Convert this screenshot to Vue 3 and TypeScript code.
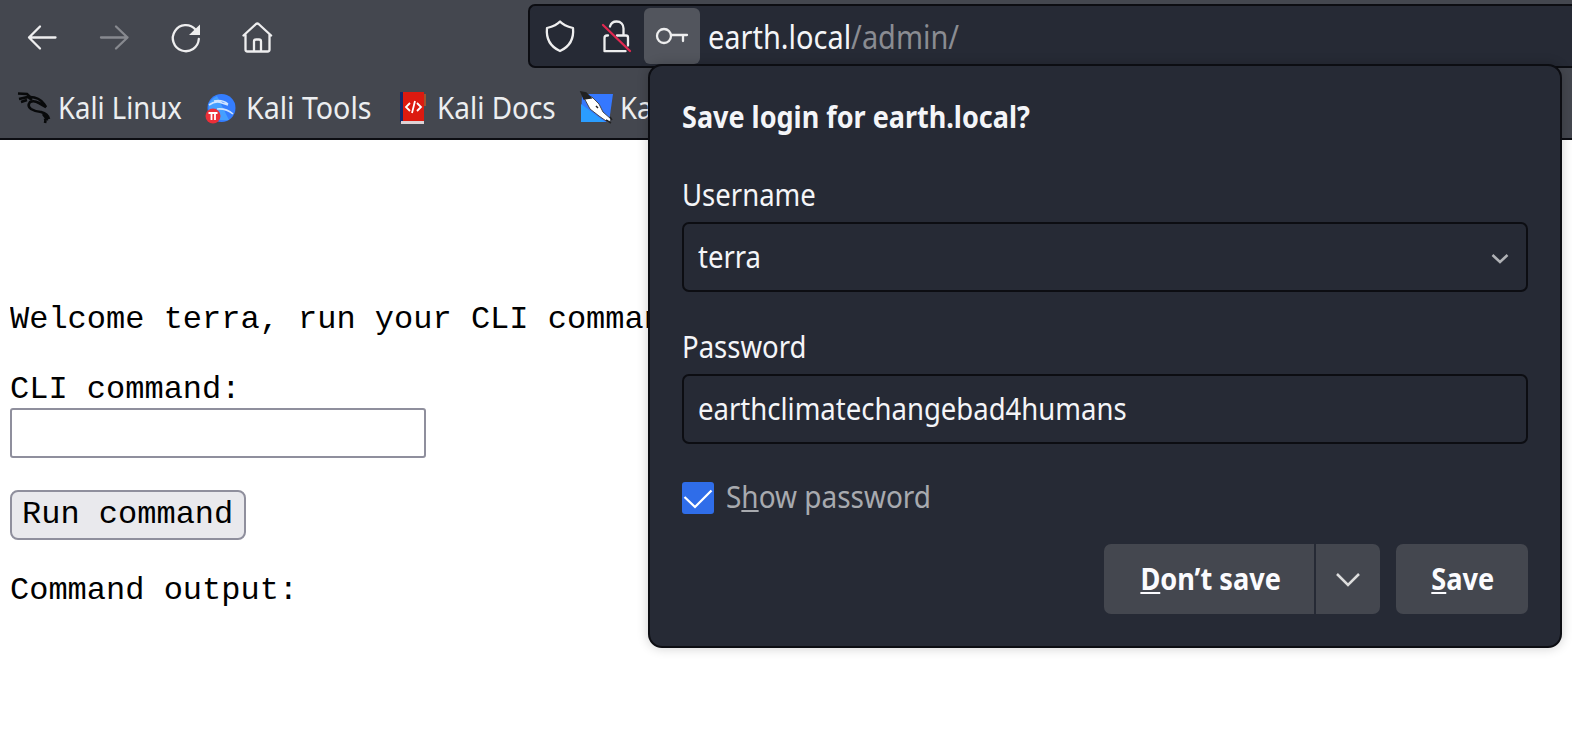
<script setup lang="ts">
import { ref } from 'vue'

const username = ref('terra')
const password = ref('earthclimatechangebad4humans')
const command = ref('')
</script>

<template>
  <div class="window">
    <header class="chrome">
      <div class="toolbar">
        <nav class="nav">
          <svg class="ico" viewBox="0 0 32 32"><path d="M29.500 16.500H3M14 5.500 3 16.500l11 11" /></svg>
          <svg class="ico dim" viewBox="0 0 32 32"><path d="M3 16.500h26.500M18 5.500 29.500 16.500 18 27.500" /></svg>
          <svg class="ico" viewBox="0 0 32 32"><path d="M28.800 18A13 13 0 1 1 25.500 8.500" /><path class="solid" d="M30 3.500v10.500H19z" /></svg>
          <svg class="ico" viewBox="0 0 32 32"><path d="M1.500 14.500 14 3q1.300-1 2.600 0l12.500 11.500M3.500 13.500v15q0 2 2 2h20q2 0 2-2v-15M12 30V20.500q0-2 2-2h3q2 0 2 2V30" /></svg>
        </nav>
        <div class="urlbar">
          <svg class="ico shield" viewBox="0 0 32 32"><path d="M16 1.500 C13 5 7 7 3 8 C2 18 5 26 16 31 C27 26 30 18 29 8 C25 7 19 5 16 1.500Z" /></svg>
          <svg class="ico lock" viewBox="0 0 32 32"><path d="M10 6.500C11 3 13.500 1.500 16.500 1.500 21 1.500 23.500 4.500 23.500 8.500V15.500M8 15.500H7q-2.500 0-2.500 2.500v13.200h21M17 15.500h9q2 0 2 2v8" /><path class="slash" d="m3 5 27 26" /></svg>
          <span class="keybox"><svg class="ico" viewBox="0 0 32 32"><circle cx="8" cy="16" r="7" /><path d="M15 15h16M27 15v6" /></svg></span>
          <span class="url tx">earth.local<i>/admin/</i></span>
        </div>
      </div>
      <div class="bookmarks">
        <svg class="bm" viewBox="0 0 32 32"><g class="dragon"><path d="M0 1.500 9 2 13 6M1 7l9-2 4 3M3 10l6-2" /><path d="M12 5q9 0 14 7l2 3-7-4q-5-3-9-1q-3 4 1 7q5 3 10 3q7 2 8 7M25 22l3 4-1 5M30 27l-4 1" /></g></svg>
        <span class="tx t1">Kali Linux</span>
        <svg class="bm" viewBox="0 0 32 32"><circle cx="16.500" cy="16" r="14" fill="#347dff" /><path d="M4 19Q2 8 12 4L24 28Q12 29 6 24z" fill="#459fff" /><path d="M4 13q7-5 13-2l6 2M9 9q8-2 14 3M12 17q9-1 16 5" stroke="#cfe4ff" stroke-width="1.600" fill="none" /><circle cx="8" cy="24" r="7.500" fill="#ec2f38" /><path d="M3.500 21h9M6.500 21v7M10 21v7" stroke="#fff" stroke-width="1.800" /></svg>
        <span class="tx t2">Kali Tools</span>
        <svg class="bm" viewBox="0 0 32 32"><path d="M3 0h5v30H3z" fill="#152a68" /><path d="M6 0h21v29H6z" fill="#dc1a10" /><path d="M27 2h2v12h-2z" fill="#a0522d" /><path d="M4 29h23v3H4z" fill="#ddd2d5" /><path d="m13 11-4 4 4 4M20 11l4 4-4 4M18 9l-3 12" stroke="#fff" stroke-width="1.800" fill="none" /></svg>
        <span class="tx t3">Kali Docs</span>
        <svg class="bm" viewBox="0 0 32 32"><path d="M1 2h31l-4 28H0z" fill="#3578ff" /><path d="M0 12 24 30H0z" fill="#2b9dff" /><path d="M2 4 11 5 18 12 22 20 30 27 28 31 18 24 9 17Z" fill="#fff" stroke="#44474f" stroke-width="1" /><path d="M0 0 5 1 10 6 3 7zM15 14l2 2M25 28l5 3M29 25l2 3" fill="#222" stroke="#222" stroke-width="1.500" /></svg>
        <span class="t4"><span class="tx">Ka</span></span>
      </div>
    </header>

    <main class="page">
      <p class="welcome">Welcome terra, run your CLI comman</p>
      <p class="label">CLI command:</p>
      <input v-model="command" class="cmd" type="text">
      <button class="run" type="button">Run command</button>
      <p class="out">Command output:</p>
    </main>

    <section class="popup">
      <h1><span class="tx">Save login for earth.local?</span></h1>
      <label class="lab"><span class="tx">Username</span></label>
      <div class="field"><span class="tx">{{ username }}</span>
        <svg class="chev" viewBox="0 0 16 10"><path d="m.5 1 7.500 7 7.500-7" /></svg>
      </div>
      <label class="lab"><span class="tx">Password</span></label>
      <div class="field"><span class="tx">{{ password }}</span></div>
      <div class="show">
        <svg class="check" viewBox="0 0 32 32"><path d="m2.500 15 10.500 10 16.500-16.500" /></svg>
        <span class="tx">S<u>h</u>ow password</span>
      </div>
      <div class="actions">
        <button class="btn dont"><span class="tx"><u>D</u>on’t save</span></button>
        <button class="btn more"><svg viewBox="0 0 24 16"><path d="m1 3 11 11L23 3" /></svg></button>
        <button class="btn save"><span class="tx"><u>S</u>ave</span></button>
      </div>
    </section>
  </div>
</template>

<style>
html, body { margin: 0; overflow: hidden; background: #fff; }
</style>

<style scoped>
* { box-sizing: border-box; }
.window { position: relative; width: 1572px; height: 748px; overflow: hidden; background: #fff; font-family: "Noto Sans", sans-serif; font-size: 30px; color: #f4f5f8; }
.tx { display: inline-block; white-space: pre; transform: scaleX(.917); transform-origin: 0 50%; }
svg { display: block; fill: none; flex: none; overflow: visible; }
.chrome { height: 140px; background: #44474f; border-bottom: 2px solid #0c0d12; }
.toolbar { height: 68px; padding-top: 4px; display: flex; }
.nav { display: flex; width: 528px; padding: 17px 0 0 26px; gap: 40px; flex: none; }
.ico { width: 32px; height: 32px; stroke: #eeeeef; stroke-width: 2.300; stroke-linejoin: round; stroke-linecap: round; }
.dim { opacity: .4; }
.solid { fill: #eee; stroke: none; }
.urlbar { flex: 1; height: 64px; display: flex; align-items: center; border: 2px solid #0c0d12; border-right: 0; border-radius: 7px 0 0 7px; background: #262a35; }
.shield { margin-left: 14px; }
.lock { margin-left: 24px; }
.slash { stroke: #e22850; }
.keybox { width: 56px; height: 56px; margin: 0 0 0 12px; padding: 12px; border-radius: 6px; background: #52555d; }
.url { margin-left: 8px; font-size: 32px; transform: scaleX(.904); padding-top: 1px; }
.url i { font-style: normal; color: #8a8c92; }
.bookmarks { height: 70px; display: flex; align-items: center; padding: 10px 0 0 18px; }
.bookmarks .tx { flex: none; color: #eceef0; position: relative; top: -1px; }
.bm { width: 32px; height: 32px; }
.dragon { stroke: #08090a; stroke-width: 2.600; }
.bookmarks .t1 { width: 147px; margin-left: 8px; }
.bookmarks .t2 { width: 151px; margin-left: 9px; transform: scaleX(.953); }
.bookmarks .t3 { width: 144px; margin-left: 8px; transform: scaleX(.931); }
.t4 { width: 29px; margin-left: 7px; overflow: hidden; }
.page { padding: 162px 10px 0; font: 32px/36px "Liberation Mono", monospace; color: #000; }
p { margin: 0; white-space: nowrap; }
.welcome { width: 638px; overflow: hidden; }
.label { margin-top: 34px; }
.cmd { display: block; width: 416px; height: 50px; margin-top: 0; border: 2px solid #8f8f9d; border-radius: 3px; background: #fff; outline: 0; }
.run { display: block; width: 236px; height: 50px; margin-top: 32px; padding: 0 0 0 10px; text-align: left; border: 2px solid #8f8f9d; border-radius: 8px; background: #e9e9ed; font: inherit; color: #000; }
.out { margin-top: 33px; }
.popup { position: absolute; left: 648px; top: 64px; width: 914px; height: 584px; padding: 31px 32px 32px; border: 2px solid #0c0d12; border-radius: 14px; background: #262a35; box-shadow: 0 0 12px rgb(0 0 0 / 20%); line-height: 40px; }
h1 { margin: 0 0 36px; height: 42px; font-size: inherit; font-weight: 700; }
h1 .tx { transform: scaleX(.9); }
.lab { display: block; height: 47px; }
.field { height: 70px; display: flex; align-items: center; justify-content: space-between; border: 2px solid #0c0d12; border-radius: 7px; padding: 0 18px 0 14px; margin-bottom: 35px; }
.chev { width: 16px; height: 10px; margin-top: 4px; stroke: #b0b2b6; stroke-width: 2.500; }
.show { height: 32px; margin-top: 38px; display: flex; align-items: center; gap: 12px; color: #a8aaaf; }
.show .tx { margin-top: -2px; transform: scaleX(.932); }
.check { width: 32px; height: 32px; background: #2f6de9; border-radius: 3px; stroke: #fff; stroke-width: 2.300; }
.actions { display: flex; justify-content: flex-end; margin-top: 30px; }
.btn { height: 70px; border: 0; padding: 0; display: flex; align-items: center; justify-content: center; background: #44474f; color: #fbfbfe; font: inherit; font-weight: 700; }
.btn .tx { transform: scaleX(.905); transform-origin: 50% 50%; }
.dont { width: 210px; padding-left: 4px; border-radius: 7px 0 0 7px; }
.more { width: 64px; margin-left: 2px; border-radius: 0 7px 7px 0; }
.more svg { width: 24px; height: 16px; stroke: #ddd; stroke-width: 2.500; }
.save { width: 132px; margin-left: 16px; padding-left: 2px; border-radius: 7px; }
u { text-decoration-thickness: 2px; text-underline-offset: 2px; text-decoration-skip-ink: none; }
</style>
